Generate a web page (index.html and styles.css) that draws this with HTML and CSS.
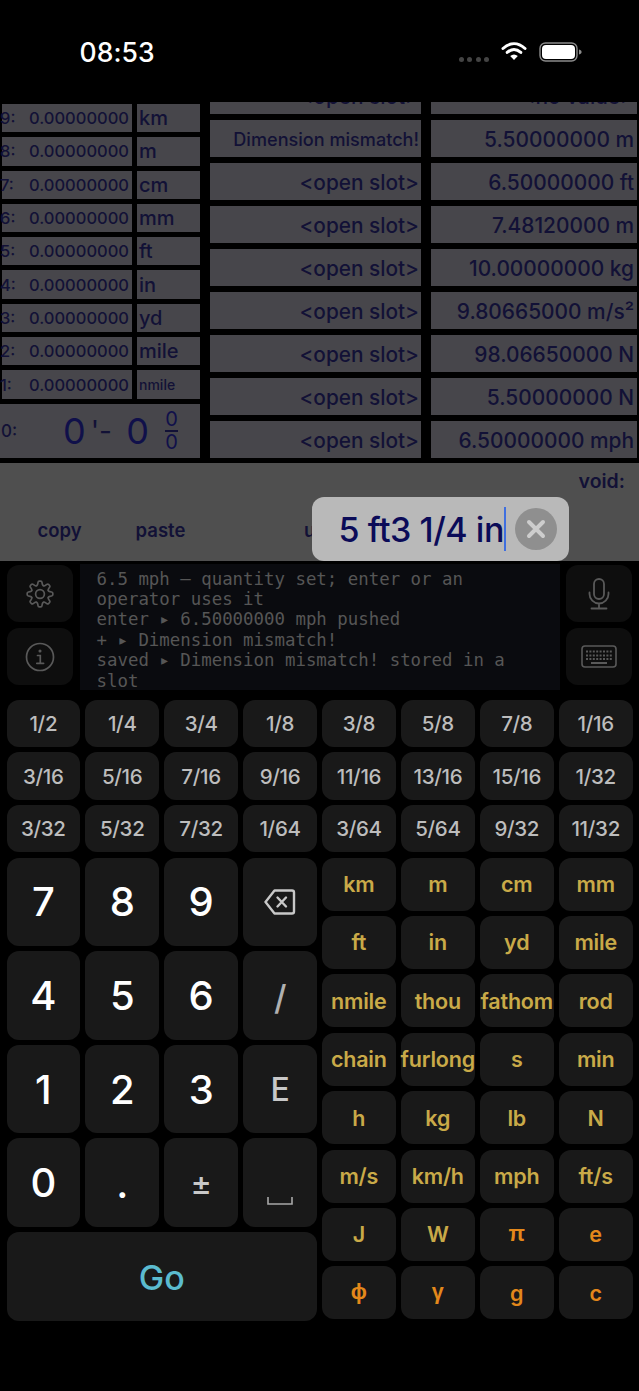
FILE: index.html
```html
<!DOCTYPE html>
<html lang="en">
<head>
<meta charset="utf-8">
<title>Calculator</title>
<link rel="stylesheet" href="styles.css">
</head>
<body>
<div class="app">
  <header class="status">
    <span class="time">08:53</span>
    <div class="status-right">
      <span class="dots"><i></i><i></i><i></i><i></i></span>
      <svg class="wifi" width="26" height="20" viewBox="0 0 26 20"><path d="M2 7.5C9 1 17 1 24 7.5" fill="none" stroke="#fff" stroke-width="3" stroke-linecap="round"/><path d="M6.2 11.4C10.6 7.6 15.4 7.6 19.8 11.4" fill="none" stroke="#fff" stroke-width="3" stroke-linecap="round"/><path d="M9.2 15C11.7 13 14.3 13 16.8 15L13 19Z" fill="#fff"/></svg>
      <svg class="battery" width="44" height="22" viewBox="0 0 44 22"><rect x="1" y="2" width="37" height="18" rx="5.5" fill="none" stroke="#8b8b8b" stroke-width="1.4"/><rect x="3" y="4" width="33" height="14" rx="4" fill="#fff"/><path d="M40 8.5c1.8.4 2.6 1.3 2.6 2.5s-.8 2.100-2.600 2.500z" fill="#8b8b8b"/></svg>
    </div>
  </header>

  <section class="panel">
    <div class="stack">
      <div class="row"><div class="val"><span class="lbl">9:</span><span>0.00000000</span></div><div class="unit">km</div></div>
      <div class="row"><div class="val"><span class="lbl">8:</span><span>0.00000000</span></div><div class="unit">m</div></div>
      <div class="row"><div class="val"><span class="lbl">7:</span><span>0.00000000</span></div><div class="unit">cm</div></div>
      <div class="row"><div class="val"><span class="lbl">6:</span><span>0.00000000</span></div><div class="unit">mm</div></div>
      <div class="row"><div class="val"><span class="lbl">5:</span><span>0.00000000</span></div><div class="unit">ft</div></div>
      <div class="row"><div class="val"><span class="lbl">4:</span><span>0.00000000</span></div><div class="unit">in</div></div>
      <div class="row"><div class="val"><span class="lbl">3:</span><span>0.00000000</span></div><div class="unit">yd</div></div>
      <div class="row"><div class="val"><span class="lbl">2:</span><span>0.00000000</span></div><div class="unit">mile</div></div>
      <div class="row"><div class="val"><span class="lbl">1:</span><span>0.00000000</span></div><div class="unit small">nmile</div></div>
      <div class="big">
        <span class="big-lbl">0:</span>
        <span class="big-n">0</span><span class="big-sep">'-</span><span class="big-n second">0</span>
        <span class="frac"><span>0</span><span class="bar"></span><span>0</span></span>
      </div>
    </div>
    <div class="slots">
      <div class="slot-row"><div class="slot">&lt;open slot&gt;</div><div class="res">&lt;no value&gt;</div></div>
      <div class="slot-row"><div class="slot tight">Dimension mismatch!</div><div class="res">5.50000000 m</div></div>
      <div class="slot-row"><div class="slot">&lt;open slot&gt;</div><div class="res">6.50000000 ft</div></div>
      <div class="slot-row"><div class="slot">&lt;open slot&gt;</div><div class="res">7.48120000 m</div></div>
      <div class="slot-row"><div class="slot">&lt;open slot&gt;</div><div class="res">10.00000000 kg</div></div>
      <div class="slot-row"><div class="slot">&lt;open slot&gt;</div><div class="res">9.80665000 m/s²</div></div>
      <div class="slot-row"><div class="slot">&lt;open slot&gt;</div><div class="res">98.06650000 N</div></div>
      <div class="slot-row"><div class="slot">&lt;open slot&gt;</div><div class="res">5.50000000 N</div></div>
      <div class="slot-row"><div class="slot">&lt;open slot&gt;</div><div class="res">6.50000000 mph</div></div>
    </div>
  </section>

  <section class="toolbar">
    <div class="void">void:</div>
    <div class="actions"><span class="act">copy</span><span class="act">paste</span><span class="act undo">undo</span></div>
    <div class="popover">
      <span class="entry">5 ft3 1/4 in</span><span class="caret"></span>
      <span class="clear"><svg width="20" height="20" viewBox="0 0 20 20"><path d="M3 3L17 17M17 3L3 17" stroke="#cdcdcd" stroke-width="4" stroke-linecap="round"/></svg></span>
    </div>
  </section>

  <section class="console">
    <div class="side">
      <div class="icon-btn">
        <svg width="30" height="30" viewBox="-15 -15 30 30" fill="none" stroke="#595959" stroke-width="1.700" stroke-linecap="round" stroke-linejoin="round">
          <g id="t"><path d="M-3.440-8.310Q-2.500-8.800-2.300-9.900L-2-11.600Q-1.800-12.800-.8-12.800H.8Q1.800-12.800 2-11.600L2.300-9.900Q2.500-8.800 3.440-8.310"/></g>
          <use href="#t" transform="rotate(45)"/><use href="#t" transform="rotate(90)"/><use href="#t" transform="rotate(135)"/><use href="#t" transform="rotate(180)"/><use href="#t" transform="rotate(225)"/><use href="#t" transform="rotate(270)"/><use href="#t" transform="rotate(315)"/>
          <circle r="4.400"/>
        </svg>
      </div>
      <div class="icon-btn">
        <svg width="30" height="30" viewBox="0 0 30 30" fill="none" stroke="#595959" stroke-width="1.700" stroke-linecap="round"><circle cx="15" cy="15" r="13.500"/><path d="M12.500 13.500H15.300V21M11.800 21.300H18.600"/><circle cx="15" cy="9" r=".7" fill="#595959"/></svg>
      </div>
    </div>
    <div class="log">6.5 mph — quantity set; enter or an operator uses it
enter ▸ 6.50000000 mph pushed
+ ▸ Dimension mismatch!
saved ▸ Dimension mismatch! stored in a slot</div>
    <div class="side">
      <div class="icon-btn">
        <svg width="24" height="32" viewBox="0 0 24 32" fill="none" stroke="#595959" stroke-width="1.800" stroke-linecap="round"><rect x="7" y="1" width="10" height="20" rx="5"/><path d="M2.500 14.500V16A9.500 9.500 0 0 0 21.500 16V14.500M12 25.500V30M4.500 30.500H19.500"/></svg>
      </div>
      <div class="icon-btn">
        <svg width="36" height="24" viewBox="0 0 36 24" fill="none" stroke="#595959" stroke-width="1.600"><rect x="1" y="1" width="34" height="21" rx="3"/><path d="M5 6.500H31M5 10.500H31M5 14H31" stroke-width="2" stroke-dasharray="2 1.400"/><path d="M10 18H26" stroke-width="2"/></svg>
      </div>
    </div>
  </section>

  <section class="keys">
    <div class="fractions">
      <button class="key f">1/2</button><button class="key f">1/4</button><button class="key f">3/4</button><button class="key f">1/8</button><button class="key f">3/8</button><button class="key f">5/8</button><button class="key f">7/8</button><button class="key f">1/16</button>
      <button class="key f">3/16</button><button class="key f">5/16</button><button class="key f">7/16</button><button class="key f">9/16</button><button class="key f">11/16</button><button class="key f">13/16</button><button class="key f">15/16</button><button class="key f">1/32</button>
      <button class="key f">3/32</button><button class="key f">5/32</button><button class="key f">7/32</button><button class="key f">1/64</button><button class="key f">3/64</button><button class="key f">5/64</button><button class="key f">9/32</button><button class="key f">11/32</button>
    </div>
    <div class="main">
      <div class="digits">
        <button class="key d">7</button><button class="key d">8</button><button class="key d">9</button>
        <button class="key op"><svg width="32" height="28" viewBox="0 0 32 28" fill="none" stroke="#c8c8c8" stroke-width="2.400" stroke-linejoin="round" stroke-linecap="round"><path d="M10.500 2.500H28Q30 2.500 30 4.500V23.500Q30 25.500 28 25.500H10.500L1.500 14Z"/><path d="M13.500 9.500L22 18.500M22 9.500L13.500 18.500"/></svg></button>
        <button class="key d">4</button><button class="key d">5</button><button class="key d">6</button><button class="key op slash">/</button>
        <button class="key d">1</button><button class="key d">2</button><button class="key d">3</button><button class="key op e">E</button>
        <button class="key d">0</button><button class="key d dot">.</button><button class="key op pm">±</button>
        <button class="key op space"><svg width="26" height="10" viewBox="0 0 26 10" fill="none" stroke="#a8a8a8" stroke-width="1.600"><path d="M1 1V8H25V1"/></svg></button>
        <button class="key go">Go</button>
      </div>
      <div class="units">
        <button class="key u">km</button><button class="key u">m</button><button class="key u">cm</button><button class="key u">mm</button>
        <button class="key u">ft</button><button class="key u">in</button><button class="key u">yd</button><button class="key u">mile</button>
        <button class="key u">nmile</button><button class="key u">thou</button><button class="key u">fathom</button><button class="key u">rod</button>
        <button class="key u">chain</button><button class="key u">furlong</button><button class="key u">s</button><button class="key u">min</button>
        <button class="key u">h</button><button class="key u">kg</button><button class="key u">lb</button><button class="key u">N</button>
        <button class="key u">m/s</button><button class="key u">km/h</button><button class="key u">mph</button><button class="key u">ft/s</button>
        <button class="key u">J</button><button class="key u">W</button><button class="key c greek">π</button><button class="key c">e</button>
        <button class="key c greek">ϕ</button><button class="key c greek">γ</button><button class="key c">g</button><button class="key c">c</button>
      </div>
    </div>
  </section>
</div>
</body>
</html>
```

FILE: styles.css
```css
* { box-sizing: border-box; }
html, body { margin: 0; padding: 0; background: #000; }
body { width: 639px; height: 1391px; overflow: hidden; font-family: Inter, "Liberation Sans", sans-serif; }
.app { width: 639px; height: 1391px; display: flex; flex-direction: column; }

/* status bar */
.status { height: 102px; flex: none; display: flex; justify-content: space-between; padding: 37px 56px 0 79.500px; color: #fff; }
.time { font-size: 26.500px; font-weight: 500; line-height: 31px; letter-spacing: .1px; }
.status-right { display: flex; align-items: flex-start; }
.dots { display: flex; gap: 3.500px; margin: 19.500px 12px 0 0; }
.dots i { width: 5px; height: 5px; border-radius: 50%; background: #444; display: block; }
.wifi { margin-top: 4px; }
.battery { margin: 4px 0 0 12px; }

/* register panel */
.panel { height: 361px; flex: none; display: flex; overflow: hidden; color: #121136; font-weight: 500; }
.stack { width: 200px; flex: none; display: flex; flex-direction: column; gap: 5px; padding: 2px 0 5px; }
.row { height: 28.300px; flex: none; display: flex; gap: 5px; padding-left: 2px; }
.val { width: 130px; background: #47464b; display: flex; justify-content: space-between; align-items: center; padding-right: 3px; font-size: 16.500px; }
.lbl { margin-left: -2px; }
.unit { flex: 1; background: #47464b; font-size: 20px; display: flex; align-items: center; padding: 0 0 0 2px; }
.unit.small { font-size: 14px; }
.big { flex: 1; background: #47464b; display: flex; align-items: center; }
.big-lbl { width: 63px; flex: none; font-size: 17px; margin-top: 1px; padding-left: 1px; }
.big-n { font-size: 36px; font-weight: 400; color: #10104a; }
.big-sep { font-size: 28px; font-weight: 400; width: 40.500px; padding-left: 5px; }
.frac { display: flex; flex-direction: column; align-items: center; font-size: 20px; line-height: 21px; margin-left: 16px; font-weight: 400; color: #10104a; }
.bar { width: 13px; height: 2px; background: #121136; }

.slots { flex: 1; display: flex; flex-direction: column; justify-content: flex-end; gap: 6px; padding: 0 2px 5px 10px; }
.slot-row { height: 37px; flex: none; display: flex; gap: 10px; }
.slot { width: 211px; flex: none; background: #47464b; display: flex; align-items: center; justify-content: flex-end; padding: 2px 2px 0 0; font-size: 20.800px; }
.slot.tight { font-size: 18.100px; padding-top: 0; }
.res { flex: 1; background: #47464b; display: flex; align-items: center; justify-content: flex-end; padding: 2px 3px 0 0; font-size: 20.900px; }

/* toolbar */
.toolbar { position: relative; height: 98px; flex: none; background: #4f4f4f; color: #121136; font-weight: 600; font-size: 18.500px; }
.void { text-align: right; padding: 6px 14px 0 0; font-size: 19.500px; }
.actions { display: flex; padding: 26px 0 0 9px; }
.act { width: 101px; text-align: center; }
.act.undo { width: auto; margin-left: 93px; }
.popover { position: absolute; left: 312px; top: 34px; width: 257px; height: 64px; border-radius: 12px; background: #b9b9b9; display: flex; align-items: center; padding: 0 0 0 26.500px; color: #0b0b58; font-weight: 500; }
.entry { font-size: 34px; letter-spacing: -.45px; white-space: nowrap; }
.caret { width: 2px; height: 44px; background: #3f6fe0; flex: none; }
.clear { width: 42px; height: 42px; border-radius: 50%; background: #8f8f8f; display: flex; align-items: center; justify-content: center; margin-left: 9px; flex: none; }

/* console */
.console { height: 134px; flex: none; display: flex; justify-content: space-between; padding: 3px 7px 0; }
.side { width: 66px; flex: none; display: flex; flex-direction: column; gap: 6px; padding-top: 1px; }
.icon-btn { height: 57px; border-radius: 12px; background: #0e0e0e; display: flex; align-items: center; justify-content: center; }
.log { width: 480px; height: 126px; flex: none; background: #0a0b0f; color: #565656; font-family: "DejaVu Sans Mono", monospace; font-size: 17.400px; line-height: 20.400px; padding: 4.500px 17px 0; white-space: pre-wrap; overflow: hidden; }

/* keys */
.keys { flex: 1; padding: 5px 6.500px 0 6.500px; display: flex; flex-direction: column; gap: 5.400px; }
.key { border: 0; margin: 0; padding: 0; background: #191919; border-radius: 12px; display: flex; align-items: center; justify-content: center; font-family: Inter, "Liberation Sans", sans-serif; white-space: nowrap; min-width: 0; }
.fractions { display: grid; grid-template-columns: repeat(8, 1fr); grid-auto-rows: 47.300px; gap: 5.200px 5.300px; }
.f { color: #bdbdbd; font-size: 20.500px; font-weight: 500; letter-spacing: -.3px; }
.main { display: flex; gap: 5px; }
.digits { width: 310.500px; flex: none; display: grid; grid-template-columns: repeat(4, 1fr); grid-auto-rows: 88.600px; gap: 5px 5.300px; }
.d { color: #fff; font-size: 40px; font-weight: 500; }
.op { color: #c8c8c8; }
.slash { font-size: 34px; color: #b0b0b0; font-weight: 500; padding-top: 4px; }
.e { font-size: 32px; font-weight: 500; }
.pm { font-size: 32px; font-weight: 500; padding-top: 2px; }
.dot { padding-top: 2px; }
.space { padding-top: 36px; }
.go { grid-column: span 4; color: #5bbbcf; font-size: 34px; font-weight: 500; padding-top: 3px; }
.units { flex: 1; display: grid; grid-template-columns: repeat(4, 1fr); grid-auto-rows: 52.900px; gap: 5.500px 5.300px; }
.u { color: #c9aa48; font-size: 21.500px; font-weight: 600; letter-spacing: -.2px; }
.c { color: #e3881b; font-size: 21.500px; font-weight: 600; }
.greek { font-family: "Liberation Sans", sans-serif; font-weight: 700; }
```
